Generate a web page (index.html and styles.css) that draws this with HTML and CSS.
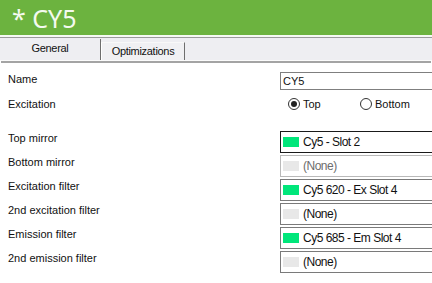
FILE: index.html
```html
<!DOCTYPE html>
<html lang="en">
<head>
  <meta charset="UTF-8">
  <title>CY5</title>
  <link rel="stylesheet" href="styles.css">
</head>
<body>
  <div class="title">* CY5</div>

  <div class="tabs">
    <div class="tab active">General</div>
    <div class="tab">Optimizations</div>
  </div>

  <div class="form">
    <div class="row name-row">
      <div class="label">Name</div>
      <div class="field text-box">CY5</div>
    </div>

    <div class="row excitation-row">
      <div class="label">Excitation</div>
      <div class="field radios">
        <span class="radio checked"><span class="dot"></span>Top</span>
        <span class="radio"><span class="dot"></span>Bottom</span>
      </div>
    </div>

    <div class="row combo-row">
      <div class="label">Top mirror</div>
      <div class="field combo focused"><span class="swatch green"></span>Cy5 - Slot 2</div>
    </div>
    <div class="row combo-row">
      <div class="label">Bottom mirror</div>
      <div class="field combo disabled"><span class="swatch"></span>(None)</div>
    </div>
    <div class="row combo-row">
      <div class="label">Excitation filter</div>
      <div class="field combo"><span class="swatch green"></span>Cy5 620 - Ex Slot 4</div>
    </div>
    <div class="row combo-row">
      <div class="label">2nd excitation filter</div>
      <div class="field combo"><span class="swatch"></span>(None)</div>
    </div>
    <div class="row combo-row">
      <div class="label">Emission filter</div>
      <div class="field combo"><span class="swatch green"></span>Cy5 685 - Em Slot 4</div>
    </div>
    <div class="row combo-row">
      <div class="label">2nd emission filter</div>
      <div class="field combo"><span class="swatch"></span>(None)</div>
    </div>
  </div>
</body>
</html>
```

FILE: styles.css
```css
body {
  margin: 0;
  background: #ffffff;
  font-family: "Liberation Sans", Arial, sans-serif;
  font-size: 11px;
  color: #111111;
  overflow: hidden;
}

.title {
  height: 35px;
  line-height: 36px;
  padding-left: 12px;
  overflow: hidden;
  background-color: #6cb33f;
  color: #f4faef;
  font-family: "Noto Sans", sans-serif;
  font-size: 25px;
  border-bottom: 2px solid #f6f9f4;
}

.tabs {
  display: flex;
  align-items: flex-end;
  height: 21px;
  background-color: #eeeef2;
  border-top: 1px solid #9a9a9a;
  border-bottom: 1px solid #fbfbfb;
  box-shadow: 0 3px 0 -1px #a4a4a4;
  margin-bottom: 3px;
  padding-top: 1px;
}

.tab {
  box-sizing: border-box;
  text-align: center;
  line-height: 17px;
  font-size: 11px;
  letter-spacing: -0.3px;
  color: #111111;
}

.tab.active {
  width: 101px;
  height: 21px;
  padding-top: 1px;
  border-right: 1px solid #6e6e6e;
}

.tab.active + .tab {
  width: 84px;
  height: 18px;
  border-left: 1px solid #ffffff;
  border-top: 1px solid #f8f8f8;
  border-right: 1px solid #6e6e6e;
  background-color: #f0f0f3;
}

.form {
  padding-top: 8px;
}

.row {
  display: flex;
  align-items: flex-start;
}

.label {
  flex-shrink: 0;
  width: 272px;
  padding-left: 8px;
  line-height: 14px;
  font-size: 11px;
}

.name-row {
  height: 24px;
}

.excitation-row {
  height: 34px;
  padding-top: 1px;
}

.combo-row {
  height: 22px;
  margin-bottom: 2px;
}

.field {
  box-sizing: border-box;
  width: 160px;
  flex-shrink: 0;
}

.text-box {
  height: 18px;
  line-height: 16px;
  padding-left: 2px;
  border: 1px solid #7f7f7f;
  border-right: none;
}

.radios {
  display: flex;
  padding-left: 8px;
  line-height: 14px;
}

.radio {
  display: flex;
  align-items: center;
  gap: 3px;
  width: 72px;
}

.radio .dot {
  box-sizing: border-box;
  width: 12px;
  height: 12px;
  border: 1px solid #333333;
  border-radius: 50%;
  background: #ffffff;
  position: relative;
}

.radio.checked .dot::after {
  content: "";
  position: absolute;
  left: 2px;
  top: 2px;
  width: 6px;
  height: 6px;
  border-radius: 50%;
  background: #222222;
}

.combo {
  display: flex;
  align-items: center;
  gap: 4px;
  height: 22px;
  padding-left: 2px;
  border: 1px solid #7a7a7a;
  border-right: none;
  font-size: 12px;
  letter-spacing: -0.5px;
}

.combo.focused {
  border-color: #1a1a1a;
}

.combo.disabled {
  border-color: #b9b9b9;
  color: #6d6d6d;
}

.swatch {
  width: 16px;
  height: 10px;
  background-color: #e8e8e8;
}

.swatch.green {
  background-color: #00e67a;
}
```
